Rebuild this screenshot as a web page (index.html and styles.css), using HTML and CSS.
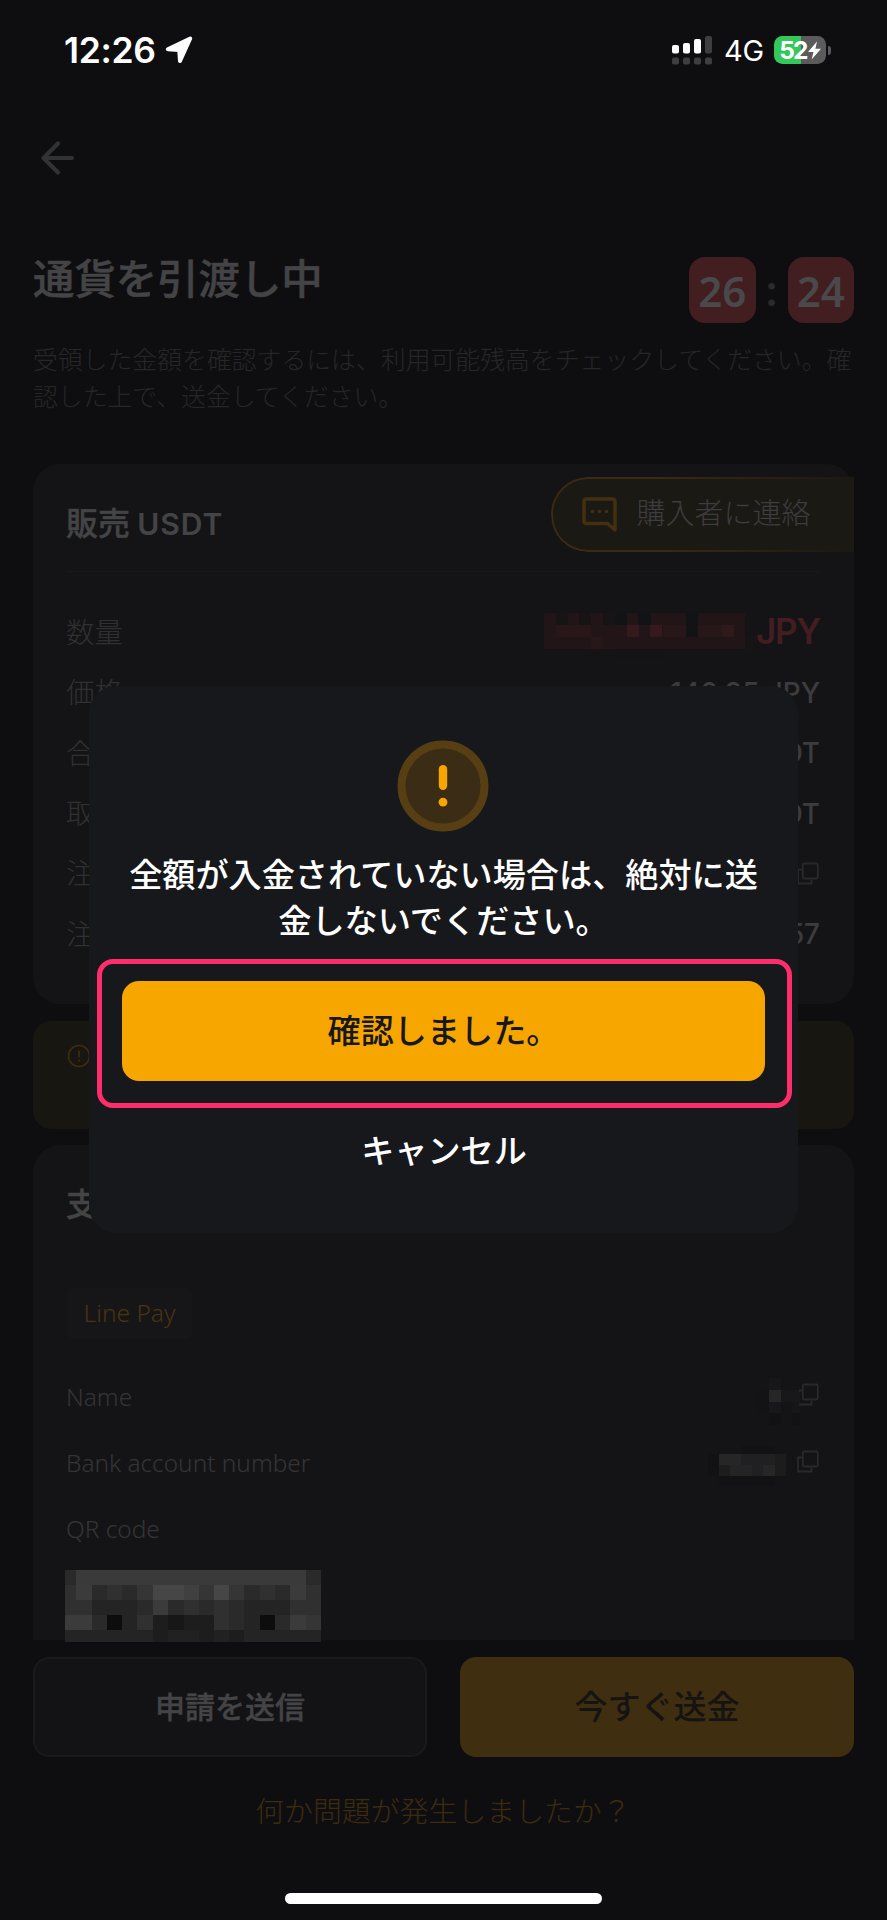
FILE: index.html
```html
<!DOCTYPE html>
<html lang="ja">
<head>
<meta charset="utf-8">
<title>通貨を引渡し中</title>
<link rel="stylesheet" href="styles.css">
</head>
<body>
<div class="screen">
  <header class="status">
    <div class="status-left">
      <span class="clock">12:26</span>
      <svg class="location" width="28" height="28" viewBox="0 0 28 28"><path d="M25.2 2.500 L15 25 L14.2 14 L2.8 13.200 Z" fill="#fff" stroke="#fff" stroke-width="4" stroke-linejoin="round"/></svg>
    </div>
    <div class="status-right">
      <svg class="signal" width="41" height="29" viewBox="0 0 41 29">
        <g fill="#fff"><rect x="0" y="9" width="7" height="8.5" rx="2"/><rect x="11" y="7" width="7" height="10.5" rx="2"/><rect x="22" y="3" width="7" height="14.5" rx="2"/></g>
        <g fill="#3e3e40"><rect x="33" y="0" width="7" height="17.5" rx="2"/><rect x="0" y="21.5" width="7" height="7" rx="2"/><rect x="11" y="21.5" width="7" height="7" rx="2"/><rect x="22" y="21.5" width="7" height="7" rx="2"/><rect x="33" y="21.5" width="7" height="7" rx="2"/></g>
      </svg>
      <span class="network">4G</span>
      <div class="battery"><span>52</span><svg width="13" height="19" viewBox="0 0 13 18"><path d="M9 0 L0 10.400 H5.500 L3.600 18 L13 7.200 H7.400 Z" fill="#fff"/></svg></div>
      <i class="battery-tip"></i>
    </div>
  </header>

  <nav class="nav">
    <svg width="34" height="34" viewBox="0 0 34 34" fill="none" stroke="#313234" stroke-width="4.2" stroke-linecap="round" stroke-linejoin="round"><path d="M17 2.5 L2.5 17 L17 31.5 M2.5 17 H31"/></svg>
  </nav>

  <main class="content">
    <div class="hero">
      <h1>通貨を引渡し中</h1>
      <div class="timer"><b>26</b><span>:</span><b>24</b></div>
    </div>
    <p class="desc">受領した金額を確認するには、利用可能残高をチェックしてください。確<br>認した上で、送金してください。</p>

    <section class="card order">
      <div class="order-head">
        <h2>販売 <span>USDT</span></h2>
        <div class="contact">
          <svg width="36" height="36" viewBox="0 0 36 36" fill="none" stroke="#442f10" stroke-width="3.6" stroke-linejoin="round"><path d="M4 2 H30 Q33 2 33 5 V33 L25.5 26.5 H4.500 Q2 26.500 2 24 V5 Q2 2 4 2 Z"/><g fill="#442f10" stroke="none"><circle cx="10.500" cy="14.500" r="1.800"/><circle cx="17.500" cy="14.500" r="1.800"/><circle cx="24.500" cy="14.500" r="1.800"/></g></svg>
          <span>購入者に連絡</span>
        </div>
      </div>
      <div class="rows">
        <div class="row"><span>数量</span>
          <div class="amount">
            <svg width="213" height="48" viewBox="0 0 213 48" shape-rendering="crispEdges">
              <rect x="0" y="0" width="201" height="36" fill="#211517"/>
              <g fill="#171416"><rect x="12" y="0" width="12" height="12"/><rect x="35" y="0" width="12" height="12"/><rect x="59" y="0" width="12" height="12"/></g>
              <g fill="#121315"><rect x="71" y="0" width="12" height="12"/><rect x="94" y="0" width="13" height="12"/><rect x="142" y="0" width="12" height="24"/><rect x="71" y="36" width="48" height="10"/></g>
              <g fill="#281719"><rect x="12" y="12" width="35" height="12"/><rect x="47" y="24" width="12" height="12"/><rect x="119" y="12" width="23" height="12"/><rect x="154" y="12" width="24" height="12"/></g>
              <g fill="#36191d"><rect x="83" y="12" width="12" height="12"/><rect x="106" y="12" width="12" height="12"/></g>
              <rect x="178" y="12" width="12" height="12" fill="#2e191b"/>
              <rect x="201" y="24" width="12" height="12" fill="#171416"/>
            </svg><b>JPY</b>
          </div>
        </div>
        <div class="row"><span>価格</span><em>146.95 JPY</em></div>
        <div class="row"><span>合計</span><em>USDT</em></div>
        <div class="row"><span>取引</span><em>USDT</em></div>
        <div class="row"><span>注文</span><svg class="copy" width="24" height="24" viewBox="0 0 24 24"><path d="M6 7.500 H2 V21.500 H15.500 V18"/><rect x="6.800" y="1.500" width="15" height="15" rx="1.500"/></svg></div>
        <div class="row"><span>注文</span><em>57</em></div>
      </div>
    </section>

    <section class="notice">
      <svg width="24" height="24" viewBox="0 0 24 24" fill="none" stroke="#3d2b10" stroke-width="1.700"><circle cx="12" cy="12" r="10.500"/><path d="M12 6.500 V13.500 M12 15.500 V17.500"/></svg>
    </section>

    <section class="card pay">
      <h2>支払</h2>
      <div class="tag">Line Pay</div>
      <div class="fields">
        <div class="field"><span>Name</span>
          <div class="value">
            <svg class="blur-name" width="44" height="48" viewBox="0 0 44 48" shape-rendering="crispEdges"><rect x="13" y="0" width="12" height="12" fill="#171719"/><rect x="0" y="12" width="13" height="24" fill="#131315"/><rect x="13" y="12" width="12" height="12" fill="#262627"/><rect x="25" y="12" width="19" height="12" fill="#18181a"/><rect x="13" y="24" width="12" height="11" fill="#18181a"/><rect x="36" y="24" width="8" height="11" fill="#161618"/><rect x="13" y="35" width="12" height="12" fill="#121214"/><rect x="36" y="35" width="8" height="12" fill="#121214"/></svg>
            <svg class="copy" width="24" height="24" viewBox="0 0 24 24"><path d="M3 7.500 H6 M3 21.500 H15.500 V18"/><rect x="6.800" y="1.500" width="15" height="15" rx="1.500"/></svg>
          </div>
        </div>
        <div class="field"><span>Bank account number</span>
          <div class="value">
            <svg class="blur-bank" width="78" height="40" viewBox="0 0 78 40" shape-rendering="crispEdges"><rect x="33" y="0" width="34" height="8" fill="#121214"/><rect x="0" y="8" width="11" height="22" fill="#121214"/><rect x="11" y="30" width="56" height="10" fill="#121214"/><rect x="11" y="8" width="22" height="11" fill="#262627"/><rect x="33" y="8" width="34" height="11" fill="#202022"/><rect x="67" y="8" width="11" height="22" fill="#1c1c1d"/><rect x="11" y="19" width="11" height="11" fill="#1d1d1e"/><rect x="22" y="19" width="22" height="11" fill="#242425"/><rect x="44" y="19" width="11" height="11" fill="#202022"/><rect x="55" y="19" width="12" height="11" fill="#262627"/></svg>
            <svg class="copy" width="24" height="24" viewBox="0 0 24 24"><path d="M6 7.500 H2 V21.500 H15.500 V18"/><rect x="6.800" y="1.500" width="15" height="15" rx="1.500"/></svg>
          </div>
        </div>
        <div class="field"><span>QR code</span></div>
      </div>
      <svg class="qr" width="256" height="72" viewBox="195 930 768 216" preserveAspectRatio="none" shape-rendering="crispEdges">
        <rect x="195" y="930" width="768" height="216" fill="#2a2a2b"/>
        <rect x="229" y="930" width="689" height="45" fill="#3a3a3b"/>
        <g fill="#303031"><rect x="195" y="975" width="34" height="90"/><rect x="321" y="975" width="46" height="45"/><rect x="551" y="1020" width="46" height="45"/><rect x="780" y="975" width="46" height="45"/><rect x="642" y="1020" width="45" height="90"/><rect x="871" y="1020" width="92" height="45"/><rect x="918" y="975" width="45" height="45"/><rect x="229" y="1020" width="46" height="45"/><rect x="412" y="1065" width="47" height="45"/></g>
        <g fill="#3b3b3c"><rect x="229" y="975" width="46" height="45"/><rect x="871" y="975" width="47" height="45"/><rect x="459" y="1020" width="46" height="45"/><rect x="195" y="1065" width="80" height="45"/><rect x="871" y="1065" width="47" height="45"/></g>
        <g fill="#353536"><rect x="412" y="975" width="47" height="45"/><rect x="597" y="975" width="45" height="45"/><rect x="687" y="975" width="46" height="45"/><rect x="918" y="1065" width="45" height="45"/></g>
        <g fill="#464647"><rect x="459" y="975" width="92" height="45"/><rect x="642" y="975" width="45" height="45"/></g>
        <rect x="551" y="975" width="46" height="45" fill="#404041"/>
        <g fill="#242425"><rect x="275" y="1020" width="137" height="45"/><rect x="733" y="1020" width="138" height="45"/><rect x="367" y="1065" width="45" height="45"/><rect x="733" y="1065" width="47" height="45"/><rect x="195" y="1110" width="264" height="36"/><rect x="733" y="1110" width="230" height="36"/></g>
        <g fill="#1d1d1e"><rect x="459" y="1065" width="183" height="81"/><rect x="687" y="1110" width="46" height="36"/></g>
        <rect x="505" y="1065" width="46" height="45" fill="#171718"/>
        <g fill="#212122"><rect x="505" y="1110" width="92" height="36"/><rect x="642" y="1110" width="45" height="36"/></g>
        <g fill="#0d0d0e"><rect x="321" y="1065" width="46" height="45"/><rect x="780" y="1065" width="46" height="45"/></g>
      </svg>
    </section>

    <div class="actions">
      <div class="btn secondary">申請を送信</div>
      <div class="btn primary">今すぐ送金</div>
    </div>
    <div class="help">何か問題が発生しましたか？</div>
  </main>
  <div class="home-bar"></div>

  <div class="modal">
    <svg class="alert" width="92" height="92" viewBox="0 0 92 92"><circle cx="46" cy="46" r="41.500" fill="#3a2c15" stroke="#573e13" stroke-width="8"/><rect x="41.800" y="25" width="8.400" height="25" rx="4.200" fill="#f7a600"/><circle cx="46" cy="62.200" r="4.400" fill="#f7a600"/></svg>
    <p>全額が入金されていない場合は、絶対に送<br>金しないでください。</p>
    <div class="highlight"><div class="confirm">確認しました。</div></div>
    <div class="cancel">キャンセル</div>
  </div>
</div>
</body>
</html>
```
FILE: styles.css
```css
* { box-sizing: border-box; }
body { margin: 0; background: #0e0e10; }
h1, h2, p { margin: 0; }
em { font-style: normal; }
svg { display: block; flex: none; }
.screen {
  position: relative; width: 887px; height: 1920px; overflow: hidden;
  background: #0e0e10; color: #444446;
  font-family: "Noto Sans", "Noto Sans CJK JP", sans-serif;
}
h1, .desc, .contact, .order .row > span, .btn, .help, .modal, h2 { font-family: "Noto Sans CJK JP", sans-serif; white-space: nowrap; }

.status { height: 100px; display: flex; justify-content: space-between; align-items: center; padding: 0 56px 0 64px; color: #fff; font-family: Inter, sans-serif; }
.status-left, .status-right { display: flex; align-items: center; }
.clock { width: 101px; font-size: 35.500px; font-weight: 600; letter-spacing: -0.300px; white-space: nowrap; }
.signal { margin-right: 11px; }
.network { width: 50px; font-size: 29px; letter-spacing: -0.3px; line-height: 36px; padding-top: 2px; }
.battery { width: 52px; height: 28px; border-radius: 8.500px; display: flex; align-items: center; justify-content: center; gap: 1px; background: linear-gradient(90deg, #34c759 0 27px, #5b5b5c 27px); font-size: 24.500px; font-weight: 700; letter-spacing: -1.800px; }
.battery-tip { width: 3px; height: 9px; margin-left: 2px; border-radius: 0 3px 3px 0; background: #5b5b5c; }

.nav { height: 114px; display: flex; align-items: center; padding: 1px 0 0 41px; }

.content { padding: 43px 33px 0; }
.hero { height: 66px; display: flex; justify-content: space-between; }
h1 { font-size: 41.400px; font-weight: 500; line-height: 39px; -webkit-text-stroke: 0.500px #444446; }
.timer { display: flex; align-items: center; color: #49494b; font-size: 42px; font-weight: 600; line-height: 66px; }
.timer b { width: 66.500px; height: 66px; border-radius: 16px; background: #421e21; text-align: center; font-weight: 600; line-height: 67px; }
.timer span { width: 32px; text-align: center; color: #2a2b2d; line-height: 70px; }
.desc { margin-top: 17px; font-size: 24.850px; line-height: 37.300px; font-weight: 300; color: #262628; }

.card { background: #141416; }
.order { height: 540px; margin-top: 49.400px; border-radius: 27px; padding-left: 34px; }
.order-head { height: 108px; display: flex; justify-content: space-between; position: relative; }
.order-head::after { content: ""; position: absolute; left: 0; right: 34px; bottom: 0; height: 1px; background: #18181a; }
h2 { height: 116px; margin-left: -1px; font-size: 32px; font-weight: 500; line-height: 114px; color: #444446; -webkit-text-stroke: 0.400px #444446; }
h2 span { font-family: Inter, sans-serif; font-size: 30px; font-weight: 600; letter-spacing: 1px; -webkit-text-stroke: 0; }
.contact { width: 303px; height: 75px; margin-top: 13px; border-radius: 37px 0 0 37px; position: relative; background: #1b1914; display: flex; padding: 20px 0 0 31px; gap: 18.500px; font-size: 29px; line-height: 29px; font-weight: 300; color: #3d3c3e; }
.contact::before { content: ""; position: absolute; inset: 0; border: 2px solid #3d2a10; border-right: 0; border-radius: 37px 0 0 37px; -webkit-mask: linear-gradient(90deg, #000 35%, transparent); mask: linear-gradient(90deg, #000 35%, transparent); }
.rows { padding: 29px 34px 0 0; }
.row { height: 60.300px; display: flex; align-items: center; justify-content: space-between; line-height: 40px; color: #3c3c3e; }
.row > span { margin-left: -1px; font-size: 28.500px; font-weight: 300; color: #303032; }
.row em { font-family: Inter, sans-serif; font-size: 27.800px; font-weight: 500; padding-top: 3px; }
.amount { display: flex; color: #431d21; height: 36px; font-family: Inter, sans-serif; font-size: 35px; line-height: 37px; }
.amount b { width: 64px; margin-left: -1px; font-weight: 600; letter-spacing: -1.300px; }
.copy { fill: none; stroke: #29292b; stroke-width: 1.800; }
.row .copy { margin-top: 3px; }

.notice { height: 108px; margin-top: 17px; border-radius: 18px; background: #181611; padding: 23px 34px; }

.pay { height: 495px; margin-top: 16px; padding: 0 34px; border-radius: 27px 27px 0 0; }
.tag { width: 125px; height: 51px; margin-top: 27px; border-radius: 6px; background: #161618; color: #4a3410; font-size: 24.500px; font-weight: 300; line-height: 50px; text-align: center; }
.fields { padding-top: 25px; }
.field { height: 66.400px; display: flex; justify-content: space-between; align-items: center; font-size: 24.400px; font-weight: 300; color: #343436; white-space: nowrap; }
.field > span { margin: -2px 0 0 -1px; }
.value { display: flex; align-items: flex-start; height: 30px; }
.blur-name { margin: -4px -4px 0 0; }
.blur-bank { margin: -3px 10px 0 0; }
.value .copy { margin-top: 1px; }
.qr { margin: 7px 0 0 -2px; }

.actions { display: grid; grid-template-columns: 1fr 1fr; gap: 33px; margin-top: 17px; }
.btn { height: 100px; border-radius: 16px; text-align: center; font-weight: 500; line-height: 97px; }
.secondary { border: 2px solid #1a1a1c; background: #131315; font-size: 30px; line-height: 93px; -webkit-text-stroke: 0.400px #444446; }
.primary { background: #402e10; color: #151413; font-size: 33px; }
.help { margin-top: 31px; padding-right: 1px; text-align: center; font-size: 28.900px; line-height: 43px; font-weight: 300; color: #3d2b10; }
.home-bar { width: 317px; height: 11px; margin: 62px auto 0; border-radius: 6px; background: #fff; }

.modal { position: absolute; left: 89px; top: 686px; width: 709px; height: 547px; padding: 54px 6px 0 8px; border-radius: 27px; background: #17181b; color: #fff; text-align: center; font-size: 33.150px; font-weight: 500; }
.alert { margin: 0 auto; position: relative; left: -1.500px; }
.modal p { margin: 18px 2px 0 0; line-height: 46px; }
.highlight { height: 149px; margin-top: 17px; border: 5px solid #ff2d6b; border-radius: 16px; padding: 16.500px 22px 0 20px; }
.confirm { height: 100px; border-radius: 17px; background: #f7a600; color: #16171a; line-height: 97px; }
.cancel { margin: 18px 1px 0 0; line-height: 46px; }
```
